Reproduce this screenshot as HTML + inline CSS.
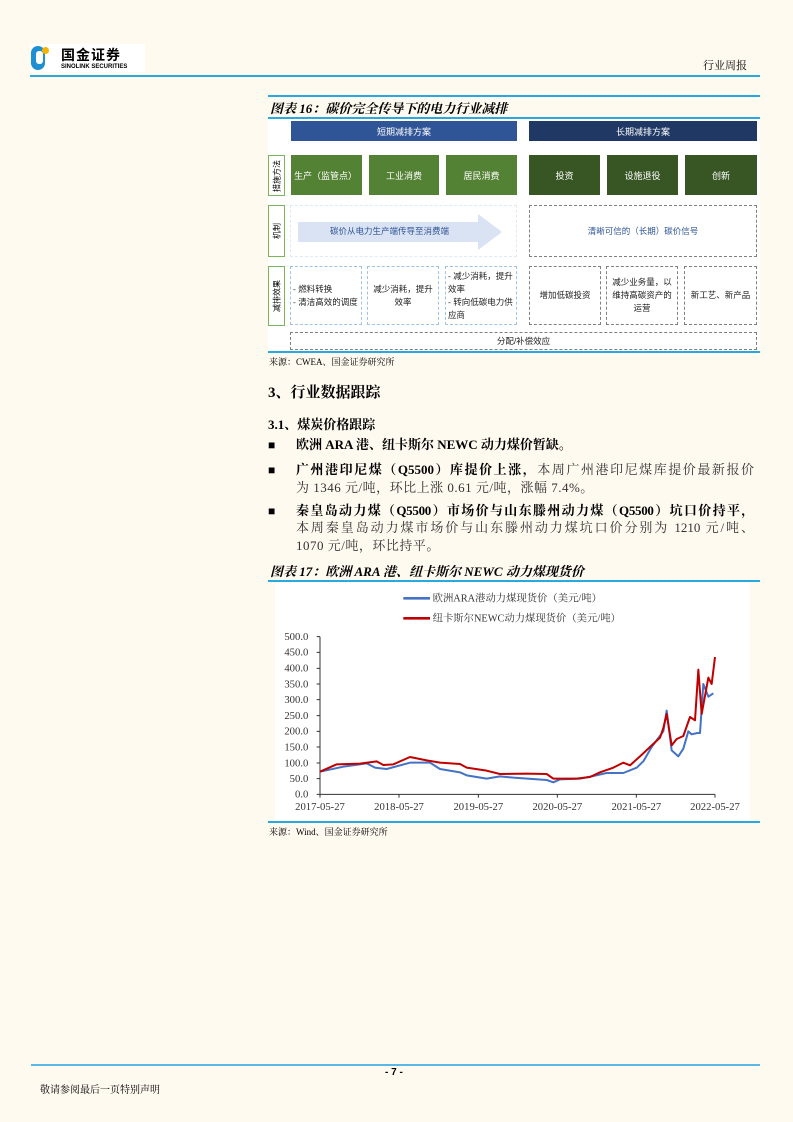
<!DOCTYPE html>
<html><head><meta charset="utf-8"><style>
*{margin:0;padding:0;box-sizing:border-box}
body{width:793px;height:1122px;background:#fffaf0;position:relative;overflow:hidden;font-family:"Liberation Serif","Noto Serif CJK SC",serif;color:#000}
.a{position:absolute}
.s{font-family:"Liberation Sans","Noto Sans CJK SC",sans-serif}
.bx{position:absolute;display:flex;align-items:center;justify-content:center;text-align:center;color:#fff;font-size:9px;font-family:"Liberation Sans","Noto Sans CJK SC",sans-serif}
.gl{background:#548235}.gd{background:#375623}
.lb{position:absolute;left:268px;width:17px;border:1.5px solid #7ab55c;background:#fff}
.lb span{position:absolute;left:50%;top:50%;transform:translate(-50%,-50%) rotate(-90deg);font-size:8px;white-space:nowrap;font-family:"Liberation Sans","Noto Sans CJK SC",sans-serif}
.db{position:absolute;border:1.5px dashed #9dc3e6;font-size:8.5px;color:#222;font-family:"Liberation Sans","Noto Sans CJK SC",sans-serif;display:flex;align-items:center;line-height:13px;padding:2px}
.dg{border-color:#7f7f7f;justify-content:center;text-align:center}
.bul{position:absolute;left:268px;font-size:12px}
.l{position:absolute;left:296px;font-size:13px;line-height:18px;white-space:nowrap}
.j{width:458px;text-align:justify;text-align-last:justify}
.g{color:#333}
b{font-weight:bold}
</style></head><body>
<!-- header -->
<div class="a" style="left:30px;top:44px;width:115px;height:28px;background:#fff"></div>
<div class="a" style="left:31px;top:46px;width:14px;height:24px;border-radius:7px;background:#1e8fd0"></div>
<div class="a" style="left:36px;top:51px;width:7px;height:13px;border-radius:3px;background:#fff"></div>
<div class="a" style="left:42px;top:47px;width:7px;height:7px;border-radius:50%;background:#f4b400"></div>
<div class="a s" style="left:61px;top:45px;font-size:14px;font-weight:bold;letter-spacing:1px">国金证券</div>
<div class="a s" style="left:61px;top:64px;font-size:6px;font-weight:bold">SINOLINK SECURITIES</div>
<div class="a" style="left:703px;top:57px;font-size:11px">行业周报</div>
<div class="a" style="left:30px;top:75px;width:730px;height:2px;background:#29a9e0"></div>

<!-- fig16 -->
<div class="a" style="left:268px;top:95px;width:492px;height:1.5px;background:#29a9e0"></div>
<div class="a" style="left:270px;top:98px;font-size:13px;font-weight:bold;font-style:italic">图表 16：碳价完全传导下的电力行业减排</div>
<div class="a" style="left:268px;top:117px;width:492px;height:1.5px;background:#29a9e0"></div>
<div class="a" style="left:268px;top:119px;width:492px;height:232px;background:#fff"></div>
<div class="bx" style="left:291px;top:121px;width:226px;height:20px;background:#2f5597">短期减排方案</div>
<div class="bx" style="left:529px;top:121px;width:228px;height:20px;background:#1f3864">长期减排方案</div>
<div class="lb" style="top:155px;height:41px"><span>措施方法</span></div>
<div class="lb" style="top:205px;height:52px"><span>机制</span></div>
<div class="lb" style="top:266px;height:60px"><span>减排效果</span></div>
<div class="bx gl" style="left:291px;top:155px;width:71px;height:40px;justify-content:flex-start;padding-left:3px">生产（监管点）</div>
<div class="bx gl" style="left:369px;top:155px;width:70px;height:40px">工业消费</div>
<div class="bx gl" style="left:446px;top:155px;width:71px;height:40px">居民消费</div>
<div class="bx gd" style="left:529px;top:155px;width:71px;height:40px">投资</div>
<div class="bx gd" style="left:607px;top:155px;width:71px;height:40px">设施退役</div>
<div class="bx gd" style="left:685px;top:155px;width:72px;height:40px">创新</div>
<div class="db" style="left:290px;top:205px;width:227px;height:52px;border-color:#ddebf7"></div>
<svg class="a" style="left:298px;top:214px" width="206" height="36"><polygon points="0,8 180,8 180,0 204,18 180,36 180,28 0,28" fill="#dae3f3"/></svg>
<div class="a s" style="left:330px;top:225px;font-size:8.5px;color:#2f5597">碳价从电力生产端传导至消费端</div>
<div class="db dg" style="left:529px;top:205px;width:228px;height:52px;color:#2f5597">清晰可信的（长期）碳价信号</div>
<div class="db" style="left:290px;top:266px;width:72px;height:59px">- 燃料转换<br>- 清洁高效的调度</div>
<div class="db" style="left:367px;top:266px;width:72px;height:59px;justify-content:center;text-align:center">减少消耗，提升效率</div>
<div class="db" style="left:445px;top:266px;width:72px;height:59px">- 减少消耗，提升效率<br>- 转向低碳电力供应商</div>
<div class="db dg" style="left:529px;top:266px;width:72px;height:59px">增加低碳投资</div>
<div class="db dg" style="left:606px;top:266px;width:72px;height:59px">减少业务量，以维持高碳资产的运营</div>
<div class="db dg" style="left:684px;top:266px;width:73px;height:59px">新工艺、新产品</div>
<div class="db dg" style="left:290px;top:332px;width:467px;height:18px">分配/补偿效应</div>
<div class="a" style="left:268px;top:351px;width:492px;height:1.5px;background:#29a9e0"></div>
<div class="a" style="left:269px;top:355px;font-size:9px">来源：CWEA、国金证券研究所</div>

<!-- section -->
<div class="a" style="left:268px;top:381px;font-size:15px;font-weight:bold">3、行业数据跟踪</div>
<div class="a" style="left:268px;top:414px;font-size:13px;font-weight:bold">3.1、煤炭价格跟踪</div>
<div class="bul" style="top:438px">■</div>
<div class="l" style="top:436px"><b>欧洲 ARA 港、纽卡斯尔 NEWC 动力煤价暂缺。</b></div>
<div class="bul" style="top:463px">■</div>
<div class="l j" style="top:461px"><b>广州港印尼煤（Q5500）库提价上涨，</b><span class="g">本周广州港印尼煤库提价最新报价</span></div>
<div class="l g" style="top:479px;letter-spacing:0.5px">为 1346 元/吨，环比上涨 0.61 元/吨，涨幅 7.4%。</div>
<div class="bul" style="top:504px">■</div>
<div class="l j" style="top:502px;letter-spacing:-0.3px"><b>秦皇岛动力煤（Q5500）市场价与山东滕州动力煤（Q5500）坑口价持平，</b></div>
<div class="l j g" style="top:519px">本周秦皇岛动力煤市场价与山东滕州动力煤坑口价分别为 1210 元/吨、</div>
<div class="l g" style="top:537px;letter-spacing:0.5px">1070 元/吨，环比持平。</div>

<!-- fig17 -->
<div class="a" style="left:270px;top:561px;font-size:13px;font-weight:bold;font-style:italic">图表 17：欧洲 ARA 港、纽卡斯尔 NEWC 动力煤现货价</div>
<div class="a" style="left:268px;top:580px;width:492px;height:1.5px;background:#29a9e0"></div>
<div class="a" style="left:275px;top:582px;width:475px;height:240px;background:#fff"></div>
<svg class="a" style="left:260px;top:560px" width="500" height="280" viewBox="0 0 1500 840">
<g font-family="Liberation Serif,Noto Serif CJK SC,serif" font-size="31" fill="#333">
<line x1="430" y1="115" x2="510" y2="115" stroke="#4472c4" stroke-width="8"/>
<text x="518" y="125">欧洲ARA港动力煤现货价（美元/吨）</text>
<line x1="430" y1="175" x2="510" y2="175" stroke="#c00000" stroke-width="8"/>
<text x="518" y="185">纽卡斯尔NEWC动力煤现货价（美元/吨）</text>
<g text-anchor="end" font-size="32">
<text x="145" y="240">500.0</text><text x="145" y="287">450.0</text><text x="145" y="335">400.0</text><text x="145" y="382">350.0</text><text x="145" y="429">300.0</text><text x="145" y="477">250.0</text><text x="145" y="524">200.0</text><text x="145" y="571">150.0</text><text x="145" y="619">100.0</text><text x="145" y="666">50.0</text><text x="145" y="713">0.0</text>
</g>
<g text-anchor="middle" font-size="32">
<text x="180" y="750">2017-05-27</text><text x="417" y="750">2018-05-27</text><text x="655" y="750">2019-05-27</text><text x="892" y="750">2020-05-27</text><text x="1129" y="750">2021-05-27</text><text x="1365" y="750">2022-05-27</text>
</g>
</g>
<g stroke="#333" stroke-width="3">
<line x1="180" y1="230" x2="180" y2="703"/><line x1="180" y1="703" x2="1365" y2="703"/>
<path d="M170 230h10M170 277h10M170 325h10M170 372h10M170 419h10M170 467h10M170 514h10M170 561h10M170 609h10M170 656h10M170 703h10M180 703v10M417 703v10M655 703v10M892 703v10M1129 703v10M1365 703v10" fill="none"/>
</g>
<polyline fill="none" stroke="#4472c4" stroke-width="6" stroke-linejoin="round" points="180,635 250,620 320,610 345,623 380,627 450,608 510,608 540,627 600,637 620,646 680,656 720,649 760,653 860,660 880,667 900,658 960,656 1000,648 1040,639 1090,639 1130,623 1150,604 1175,561 1210,514 1220,452 1235,571 1255,589 1270,566 1285,514 1295,523 1312,519 1320,519 1330,372 1345,410 1360,400"/>
<polyline fill="none" stroke="#c00000" stroke-width="6" stroke-linejoin="round" points="180,635 230,613 300,611 350,604 370,615 400,613 450,591 500,601 540,608 600,612 620,623 680,632 720,642 800,641 860,642 880,656 950,656 990,651 1020,637 1060,623 1090,608 1110,616 1140,589 1170,561 1200,533 1210,504 1220,462 1235,556 1250,537 1270,528 1290,471 1305,481 1315,329 1325,462 1345,353 1355,372 1365,291"/>
</svg>
<div class="a" style="left:268px;top:821px;width:492px;height:1.5px;background:#29a9e0"></div>
<div class="a" style="left:269px;top:825px;font-size:9px">来源：Wind、国金证券研究所</div>

<!-- footer -->
<div class="a" style="left:31px;top:1064px;width:729px;height:1.5px;background:#5bb8e6"></div>
<div class="a s" style="left:385px;top:1067px;font-size:10px;font-weight:bold">- 7 -</div>
<div class="a" style="left:40px;top:1081px;font-size:10px">敬请参阅最后一页特别声明</div>
</body></html>
